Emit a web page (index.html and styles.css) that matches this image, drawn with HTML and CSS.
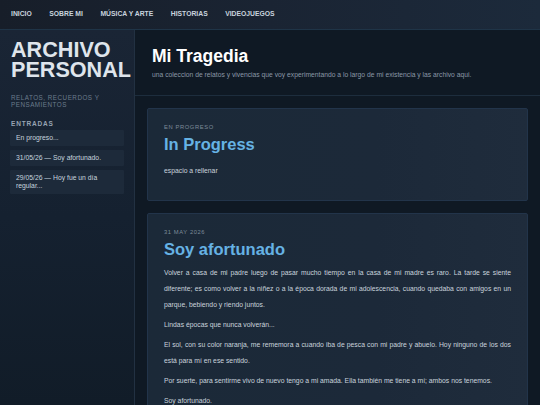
FILE: index.html
```html
<!DOCTYPE html>
<html lang="es">
<head>
<meta charset="utf-8">
<title>Archivo Personal</title>
<link rel="stylesheet" href="styles.css">
</head>
<body>
<nav class="topnav">
  <a href="#">Inicio</a>
  <a href="#">Sobre mi</a>
  <a href="#">Música y Arte</a>
  <a href="#">Historias</a>
  <a href="#">Videojuegos</a>
</nav>
<div class="layout">
  <aside class="sidebar">
    <h1 class="site-title">ARCHIVO PERSONAL</h1>
    <p class="site-sub">Relatos, recuerdos y pensamientos</p>
    <h2 class="side-head">Entradas</h2>
    <ul class="entries">
      <li>En progreso...</li>
      <li>31/05/26 — Soy afortunado.</li>
      <li>29/05/26 — Hoy fue un día regular...</li>
    </ul>
  </aside>
  <main class="main">
    <header class="main-head">
      <h1 class="main-title">Mi Tragedia</h1>
      <p class="main-sub">una coleccion de relatos y vivencias que voy experimentando a lo largo de mi existencia y las archivo aqui.</p>
    </header>
    <div class="posts">
      <article class="card card-draft">
        <div class="meta">En progreso</div>
        <h2 class="post-title">In Progress</h2>
        <p>espacio a rellenar</p>
      </article>
      <article class="card">
        <div class="meta">31 May 2026</div>
        <h2 class="post-title">Soy afortunado</h2>
        <p>Volver a casa de mi padre luego de pasar mucho tiempo en la casa de mi madre es raro. La tarde se siente diferente; es como volver a la niñez o a la época dorada de mi adolescencia, cuando quedaba con amigos en un parque, bebiendo y riendo juntos.</p>
        <p>Lindas épocas que nunca volverán...</p>
        <p>El sol, con su color naranja, me rememora a cuando iba de pesca con mi padre y abuelo. Hoy ninguno de los dos está para mí en ese sentido.</p>
        <p>Por suerte, para sentirme vivo de nuevo tengo a mi amada. Ella también me tiene a mí; ambos nos tenemos.</p>
        <p>Soy afortunado.</p>
      </article>
    </div>
  </main>
</div>
</body>
</html>
```

FILE: styles.css
```css
* { box-sizing: border-box; }
html, body {
  margin: 0;
  padding: 0;
  height: 100%;
  overflow: hidden;
}
body {
  background: #0f1924;
  font-family: "Liberation Sans", Arial, sans-serif;
  color: #c6d4df;
}
.topnav {
  height: 30px;
  display: flex;
  align-items: center;
  gap: 17.5px;
  padding: 0 11px;
  background: linear-gradient(90deg, #171e29 0%, #1a2433 50%, #1c2a3b 100%);
  border-bottom: 1px solid #1f3447;
}
.topnav a {
  color: #c8d3de;
  text-decoration: none;
  text-transform: uppercase;
  font-weight: bold;
  font-size: 6.8px;
  margin-top: -2px;
}
.layout {
  display: flex;
  height: calc(100% - 30px);
}
.sidebar {
  width: 135px;
  flex: none;
  background: linear-gradient(180deg, #1a2535 0%, #152130 50%, #111c28 100%);
  border-right: 1px solid #223142;
  padding: 10px 10px 0 11px;
}
.site-title {
  margin: 0;
  font-size: 21.6px;
  line-height: 20px;
  font-weight: bold;
  color: #dfe5ec;
  letter-spacing: 0;
}
.site-sub {
  margin: 14px 0 0;
  font-size: 6.3px;
  line-height: 7px;
  text-transform: uppercase;
  letter-spacing: 0.5px;
  color: #6a7b8c;
}
.side-head {
  margin: 12px 0 0;
  font-size: 6.5px;
  line-height: 8px;
  text-transform: uppercase;
  letter-spacing: 0.8px;
  font-weight: bold;
  color: #97a4b2;
}
.entries {
  list-style: none;
  margin: 2px 0 0 -1px;
  padding: 0;
  display: flex;
  flex-direction: column;
  gap: 4px;
  width: 114px;
}
.entries li {
  background: #1d2a3a;
  border-radius: 1px;
  padding: 4px 6px;
  font-size: 6.8px;
  line-height: 8px;
  color: #c6d4df;
}
.main {
  flex: 1;
  min-width: 0;
}
.main-head {
  padding: 16px 17px 0;
  height: 66px;
  border-bottom: 1px solid #1d2d3d;
}
.main-title {
  margin: 0;
  font-size: 17.5px;
  line-height: 20px;
  font-weight: bold;
  color: #ffffff;
}
.main-sub {
  margin: 5px 0 0;
  font-size: 6.75px;
  line-height: 8px;
  color: #8a98a6;
}
.posts {
  padding: 12px 12px 0;
  display: flex;
  flex-direction: column;
  gap: 12px;
}
.card {
  background: linear-gradient(90deg, #1b2938 0%, #1c2939 60%, #1f2c3c 100%);
  border: 1px solid #22344a;
  border-radius: 2px;
  padding: 15px 16px 22px;
}
.card-draft {
  padding-bottom: 21px;
}
.meta {
  font-size: 5.8px;
  line-height: 7px;
  text-transform: uppercase;
  letter-spacing: 0.6px;
  color: #7d8b99;
}
.post-title {
  margin: 3px 0 0;
  font-size: 16.5px;
  line-height: 20px;
  font-weight: bold;
  color: #66b2e4;
}
.card p {
  margin: 0;
  font-size: 6.8px;
  line-height: 16px;
  text-align: justify;
  color: #c9d3dd;
}
.post-title + p {
  margin-top: 6px;
}
.card-draft .post-title + p {
  margin-top: 9px;
}
.card p + p {
  margin-top: 4px;
}
```
